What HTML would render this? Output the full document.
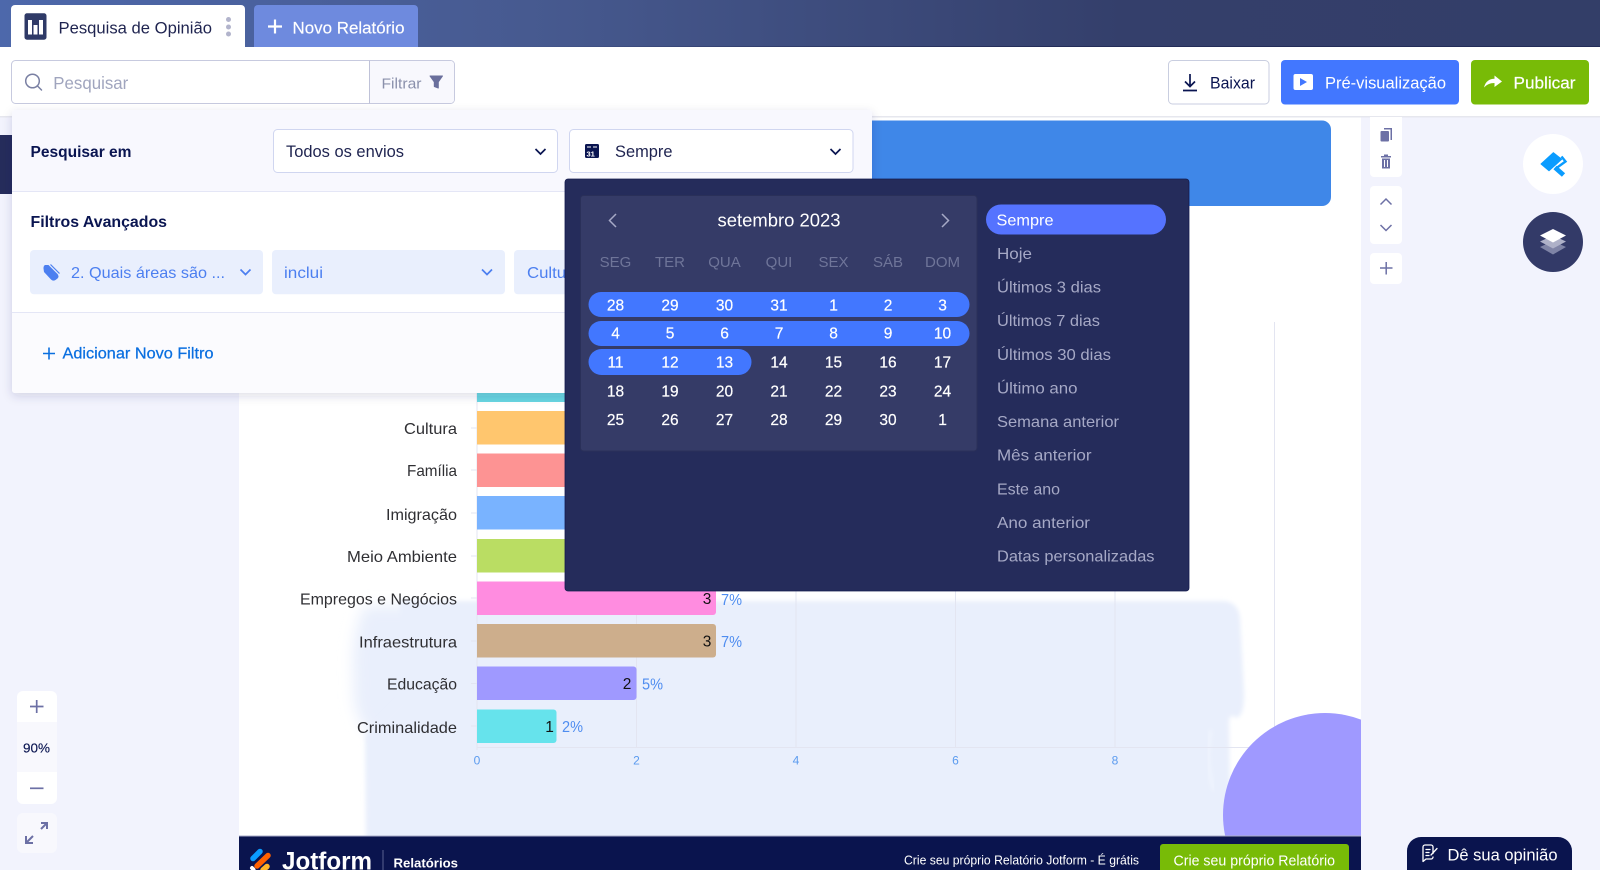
<!DOCTYPE html>
<html lang="pt">
<head>
<meta charset="utf-8">
<title>Pesquisa de Opinião</title>
<style>
html,body{margin:0;padding:0;width:1600px;height:870px;overflow:hidden;background:#f2f3fd}
svg{display:block;position:absolute;left:0;top:0;overflow:hidden}
text{font-family:"Liberation Sans",sans-serif;white-space:pre}
.d{fill:#1f2450;font-size:17px}
.n{fill:#0a1551;font-size:16px;font-weight:700}
.w{fill:#fff;font-size:17px;stroke:#fff;stroke-width:.15}
.c{fill:#4c7ff0;font-size:16px}
.l{fill:#2f2f33;font-size:16px}
.v{fill:#111;font-size:15.5px;text-anchor:middle}
.p{fill:#4f8df0;font-size:15.5px}
.t{fill:#5b9bef;font-size:12px;text-anchor:middle}
.h{fill:#6f7599;font-size:15px;text-anchor:middle}
.a{fill:#fff;font-size:15.5px;text-anchor:middle;stroke:#fff;stroke-width:.2}
.s{fill:#a6a9c6;font-size:16px}
</style>
</head>
<body>
<svg width="1600" height="870" viewBox="0 0 1600 870" xmlns="http://www.w3.org/2000/svg">
<defs>
<linearGradient id="top" x1="0" x2="1" y1="0" y2="0">
<stop offset="0" stop-color="#4d68ab"/><stop offset=".33" stop-color="#475a90"/><stop offset=".7" stop-color="#343f6b"/><stop offset="1" stop-color="#333e68"/>
</linearGradient>
<linearGradient id="ln" x1="0" x2="1" y1="0" y2="0">
<stop offset="0" stop-color="#232c58" stop-opacity="0"/><stop offset=".5" stop-color="#232c58"/><stop offset="1" stop-color="#232c58"/>
</linearGradient>
<filter id="sh" x="-5%" y="-5%" width="110%" height="115%"><feDropShadow dx="0" dy="3" stdDeviation="5" flood-color="#2a3060" flood-opacity=".16"/></filter>
<filter id="bl" x="-5%" y="-5%" width="110%" height="110%"><feGaussianBlur stdDeviation="2"/></filter>
<filter id="bl2" x="-50%" y="-20%" width="200%" height="140%"><feGaussianBlur stdDeviation="7"/></filter>
<clipPath id="pg"><rect x="239" y="117" width="1122" height="719"/></clipPath>
<clipPath id="fr"><rect x="0" y="0" width="1600" height="870"/></clipPath>
</defs>
<g clip-path="url(#fr)">

<!-- canvas -->
<rect width="1600" height="870" fill="#f2f3fd"/>
<rect x="0" y="135" width="14" height="59" fill="#252c5b"/>
<rect x="239" y="117" width="1122" height="753" fill="#fff"/>

<!-- decorative blob -->
<g clip-path="url(#pg)">
<path d="M365 606 H420 V735 H372 Q358 725 354 700 L353 655 Q356 620 365 606Z" fill="#e9effc" filter="url(#bl2)"/>
<path d="M400 601 H1222 Q1238 601 1240 618 L1244 690 Q1245 716 1236 718 Q1230 712 1229 722 L1231 845 H366 L365 735 L400 700Z" fill="#e9effc" filter="url(#bl)"/>
<path d="M1211 730 Q1204 760 1214 790" stroke="#f1f5fe" stroke-width="3" fill="none" filter="url(#bl)"/>
</g>

<!-- blue header banner -->
<rect x="600" y="120.500" width="731" height="85.500" rx="9" fill="#3f87e8"/>

<!-- chart grid -->
<g stroke="#e3e5f1" stroke-width="1" fill="none">
<path d="M477 322V750M636.500 322V747M796 322V747M955.500 322V747M1115 322V747M1274.500 322V747"/>
<path d="M477 747.500H1300"/>
<path d="M471 428H477M471 470H477M471 513H477M471 556H477M471 598H477M471 641H477M471 683.500H477M471 726H477"/>
</g>
<circle cx="1325" cy="815" r="102" fill="#9f99ff" clip-path="url(#pg)"/>

<!-- bars -->
<rect x="477" y="380" width="120" height="22" fill="#68d6e0"/>
<rect x="477" y="411" width="120" height="33.500" fill="#ffc66e"/>
<rect x="477" y="453.500" width="120" height="33.500" fill="#fd9393"/>
<rect x="477" y="496" width="120" height="33.500" fill="#79b3ff"/>
<rect x="477" y="539" width="120" height="33.500" fill="#badd63"/>
<path d="M477 581.500H713a3 3 0 0 1 3 3V612a3 3 0 0 1-3 3H477Z" fill="#ff8ce0"/>
<path d="M477 624H713a3 3 0 0 1 3 3V654.500a3 3 0 0 1-3 3H477Z" fill="#cdae8c"/>
<path d="M477 666.500H633.500a3 3 0 0 1 3 3V697a3 3 0 0 1-3 3H477Z" fill="#9f99ff"/>
<path d="M477 709.500H553.500a3 3 0 0 1 3 3V740a3 3 0 0 1-3 3H477Z" fill="#66e3ec"/>

<g>
<text class="l" x="404" y="434" textLength="53" lengthAdjust="spacingAndGlyphs">Cultura</text>
<text class="l" x="407" y="476" textLength="50" lengthAdjust="spacingAndGlyphs">Família</text>
<text class="l" x="386" y="520" textLength="71" lengthAdjust="spacingAndGlyphs">Imigração</text>
<text class="l" x="347" y="562" textLength="110" lengthAdjust="spacingAndGlyphs">Meio Ambiente</text>
<text class="l" x="300" y="604.500" textLength="157" lengthAdjust="spacingAndGlyphs">Empregos e Negócios</text>
<text class="l" x="359" y="647.500" textLength="98" lengthAdjust="spacingAndGlyphs">Infraestrutura</text>
<text class="l" x="387" y="689.500" textLength="70" lengthAdjust="spacingAndGlyphs">Educação</text>
<text class="l" x="357" y="733" textLength="100" lengthAdjust="spacingAndGlyphs">Criminalidade</text>
</g>
<text class="v" x="707" y="604">3</text><text class="p" x="721" y="605" textLength="21" lengthAdjust="spacingAndGlyphs">7%</text>
<text class="v" x="707" y="646.500">3</text><text class="p" x="721" y="647" textLength="21" lengthAdjust="spacingAndGlyphs">7%</text>
<text class="v" x="627" y="689">2</text><text class="p" x="642" y="689.500" textLength="21" lengthAdjust="spacingAndGlyphs">5%</text>
<text class="v" x="549.500" y="732">1</text><text class="p" x="562" y="732" textLength="21" lengthAdjust="spacingAndGlyphs">2%</text>
<text class="t" x="477" y="764.500">0</text><text class="t" x="636.500" y="764.500">2</text><text class="t" x="796" y="764.500">4</text><text class="t" x="955.500" y="764.500">6</text><text class="t" x="1115" y="764.500">8</text>

<!-- footer -->
<rect x="239" y="835.500" width="1122" height="1" fill="#a9adc9"/>
<rect x="239" y="836.500" width="1122" height="33.500" fill="#0a144e"/>
<g fill="none" stroke-linecap="round">
<path d="M253 858.500L260 851.500" stroke="#0a9cff" stroke-width="5.500"/>
<path d="M257 866L268 855.500" stroke="#ff6100" stroke-width="5.500"/>
<path d="M263 870L267 866.500" stroke="#ffb629" stroke-width="5.500"/>
<path d="M252 868L253.500 869.500" stroke="#fff" stroke-width="4"/>
</g>
<text x="282" y="869.500" fill="#fff" font-size="25" font-weight="700" textLength="90" lengthAdjust="spacingAndGlyphs">Jotform</text>
<rect x="382.500" y="850" width="1" height="20" fill="#5a6290"/>
<text x="393.500" y="867.500" fill="#fff" font-size="13" font-weight="700" textLength="64.500" lengthAdjust="spacingAndGlyphs">Relatórios</text>
<text x="904" y="864.500" fill="#fff" font-size="12.500" textLength="235" lengthAdjust="spacingAndGlyphs">Crie seu próprio Relatório Jotform - É grátis</text>
<path d="M1160 870V847a3 3 0 0 1 3-3H1346a3 3 0 0 1 3 3V870Z" fill="#78bb07"/>
<text x="1173.500" y="865.500" fill="#fff" font-size="14.500" textLength="161.500" lengthAdjust="spacingAndGlyphs">Crie seu próprio Relatório</text>

<!-- feedback -->
<path d="M1407 870V851a14 14 0 0 1 14-14H1558a14 14 0 0 1 14 14V870Z" fill="#0a144e"/>
<g fill="none" stroke="#fff" stroke-width="1.300" stroke-linecap="round" stroke-linejoin="round">
<path d="M1433 853.500V847a2 2 0 0 0-2-2H1425a2 2 0 0 0-2 2V861.500L1426 859H1431a2 2 0 0 0 2-2"/>
<path d="M1426 849.500H1430M1426 852.500H1429M1426 855.500H1429M1431 855L1437 848.500"/>
</g>
<text x="1447.500" y="860.500" fill="#fff" font-size="16.500" textLength="110" lengthAdjust="spacingAndGlyphs">Dê sua opinião</text>

<!-- top bar -->
<rect width="1600" height="47" fill="url(#top)"/>
<rect y="46" x="500" width="1100" height="1" fill="url(#ln)"/>
<rect y="47" width="1600" height="69" fill="#fff"/>
<rect y="116" width="1600" height="1.500" fill="#e6e7ee"/>

<path d="M11 47V9a4 4 0 0 1 4-4H241a4 4 0 0 1 4 4V47Z" fill="#fff"/>
<rect x="24.500" y="13.300" width="22" height="26.400" rx="2.500" fill="#2f3a67"/>
<g fill="#fff"><rect x="28" y="20" width="4" height="14.500"/><rect x="33.500" y="25" width="4" height="9.500"/><rect x="39" y="20" width="4" height="14.500"/></g>
<text class="d" x="58.500" y="33.300" textLength="153.500" lengthAdjust="spacingAndGlyphs">Pesquisa de Opinião</text>
<g fill="#b2b4cc"><circle cx="228.500" cy="19.500" r="2.500"/><circle cx="228.500" cy="27" r="2.500"/><circle cx="228.500" cy="34" r="2.500"/></g>

<path d="M254 47V9a4 4 0 0 1 4-4H414a4 4 0 0 1 4 4V47Z" fill="#6e8ade"/>
<path d="M268 26.500H282M275 19.500V33.500" stroke="#fff" stroke-width="2.200" fill="none"/>
<text class="w" x="292.500" y="33.300" textLength="112" lengthAdjust="spacingAndGlyphs">Novo Relatório</text>

<!-- search -->
<rect x="11.500" y="60.500" width="443" height="43" rx="4" fill="#fff" stroke="#c7cadf"/>
<path d="M369.500 61H450.500a3.500 3.500 0 0 1 3.500 3.500V99.500a3.500 3.500 0 0 1-3.500 3.500H369.500Z" fill="#f8f8fd"/>
<path d="M369.500 60.500V103.500" stroke="#bfc2d8" fill="none"/>
<circle cx="32.500" cy="81" r="6.800" fill="none" stroke="#7a80a3" stroke-width="1.500"/><path d="M37.500 86L41.500 90" stroke="#7a80a3" stroke-width="1.500" stroke-linecap="round"/>
<text x="53.300" y="89" fill="#a0a5be" font-size="17.500" textLength="75" lengthAdjust="spacingAndGlyphs">Pesquisar</text>
<text x="381.500" y="88.300" fill="#8a90ab" font-size="15" textLength="40" lengthAdjust="spacingAndGlyphs">Filtrar</text>
<path d="M430 76H442.500L438.300 82V88L434.300 86.500V82Z" fill="#6a6f9c" stroke="#6a6f9c" stroke-width="1" stroke-linejoin="round"/>

<!-- action buttons -->
<rect x="1168.500" y="60.500" width="100.500" height="43.500" rx="4" fill="#fff" stroke="#c9cee0"/>
<path d="M1190 74V86M1185 81.500L1190 86.500L1195 81.500M1183 90.500H1197" fill="none" stroke="#0a1551" stroke-width="1.700"/>
<text x="1210" y="88.500" fill="#0a1551" font-size="16.500" textLength="45" lengthAdjust="spacingAndGlyphs">Baixar</text>

<rect x="1281" y="60" width="178" height="44.500" rx="4" fill="#4277ff"/>
<rect x="1293.500" y="74" width="19.500" height="16" rx="2" fill="#fff"/><path d="M1300 78V86L1307 82Z" fill="#4277ff"/>
<text x="1325" y="88.500" fill="#fff" font-size="17" textLength="121" lengthAdjust="spacingAndGlyphs">Pré-visualização</text>

<rect x="1471" y="60" width="118" height="44.500" rx="4" fill="#78bb07"/>
<path d="M1484 87.500C1485.500 81.500 1489.500 78.800 1494.500 78.800V75.500L1502 81.500L1494.500 87V83C1490 83 1487 84.500 1484 87.500Z" fill="#fff"/>
<text x="1513.500" y="88.500" fill="#fff" font-size="17" stroke="#fff" stroke-width=".2" textLength="62" lengthAdjust="spacingAndGlyphs">Publicar</text>

<!-- right tools -->
<path d="M1370 117H1402V173a4 4 0 0 1-4 4H1374a4 4 0 0 1-4-4Z" fill="#fff"/>
<rect x="1370" y="186" width="32" height="58" rx="4" fill="#fff"/>
<rect x="1370" y="253" width="32" height="31" rx="4" fill="#fff"/>
<g fill="#6c70a5">
<path d="M1384 128H1392V140H1390.500V129.500H1384Z"/><rect x="1380.500" y="131" width="8.500" height="10.500" rx="1"/>
<path d="M1381 156H1391V157.500H1381ZM1384 154.500H1388V156H1384Z"/>
<path fill-rule="evenodd" d="M1382 158.500H1390V168.500H1382ZM1384 160V167H1385V160ZM1387 160V167H1388V160Z"/>
</g>
<g fill="none" stroke="#6c70a5" stroke-width="1.500">
<path d="M1380.500 204.500L1386 199L1391.500 204.500"/>
<path d="M1380.500 225L1386 230.500L1391.500 225"/>
<path d="M1380 268H1392.500M1386.200 262V274.500"/>
</g>
<circle cx="1553" cy="164" r="30" fill="#fff"/>
<path d="M1541 164L1553.300 152.700L1561.700 159.300L1549 170.700Z" fill="#0a9cff" stroke="#0a9cff" stroke-width="1" stroke-linejoin="round"/>
<path d="M1561.500 156.500L1565.500 161.500L1556.500 168" fill="none" stroke="#0a9cff" stroke-width="2.400"/>
<path d="M1555 167.500L1563.500 175" fill="none" stroke="#0a9cff" stroke-width="4.800"/>
<circle cx="1553" cy="242" r="30" fill="#333a68"/>
<path d="M1540 247L1553 241L1566 247L1553 254.500Z" fill="#7f84a6"/>
<path d="M1540 241.500L1553 235.500L1566 241.500L1553 248.500Z" fill="#aeb1c8"/>
<path d="M1540 235.500L1553 229L1566 235.500L1553 242.500Z" fill="#fff"/>

<!-- zoom -->
<path d="M17 722V697a6 6 0 0 1 6-6H51a6 6 0 0 1 6 6V722Z" fill="#fff"/>
<rect x="17" y="722" width="40" height="50" fill="#f8f8fd"/>
<path d="M17 772H57V798a6 6 0 0 1-6 6H23a6 6 0 0 1-6-6Z" fill="#fff"/>
<path d="M30 706.500H43.500M36.700 700V713" stroke="#6c70a5" stroke-width="1.700" fill="none"/>
<path d="M30 788.300H43.500" stroke="#6c70a5" stroke-width="1.700" fill="none"/>
<text x="23" y="752.500" fill="#0a1551" font-size="13" textLength="27" lengthAdjust="spacingAndGlyphs" stroke="#0a1551" stroke-width=".15">90%</text>
<rect x="17" y="813" width="40" height="40" rx="6" fill="#f8f8fd"/>
<g fill="none" stroke="#6c70a5" stroke-width="2">
<path d="M41 823H47V829M47 823L41 829"/><path d="M26 836V843H33M26 843L33 836"/>
</g>

<!-- filter panel -->
<g filter="url(#sh)"><rect x="12" y="110" width="860" height="283" rx="3" fill="#fff"/></g>
<path d="M12 113a3 3 0 0 1 3-3H869a3 3 0 0 1 3 3V191H12Z" fill="#f8f8fe"/>
<path d="M12 191.500H872" stroke="#e4e6f6" fill="none"/>
<path d="M12 312.500H872V390a3 3 0 0 1-3 3H15a3 3 0 0 1-3-3Z" fill="#fbfbfe"/>
<path d="M12 312.500H872" stroke="#e4e6f6" fill="none"/>

<text class="n" x="30.500" y="157" textLength="101" lengthAdjust="spacingAndGlyphs">Pesquisar em</text>
<rect x="273.500" y="129.500" width="284" height="43" rx="4" fill="#fff" stroke="#d0d6f0"/>
<text x="286" y="157" fill="#1f2450" font-size="16.500" textLength="118" lengthAdjust="spacingAndGlyphs">Todos os envios</text>
<path d="M535.500 149L540.500 154L545.500 149" fill="none" stroke="#0a1551" stroke-width="1.700"/>

<rect x="569.500" y="129.500" width="283.500" height="43" rx="4" fill="#fff" stroke="#d0d6f0"/>
<rect x="585" y="144" width="14" height="14" rx="1.500" fill="#0a1551"/>
<path d="M587 147H591M593 147H597" stroke="#fff" stroke-width="1" fill="none"/>
<text x="586.500" y="156.500" fill="#fff" font-size="7.500" font-weight="700">31</text>
<text x="615" y="157" fill="#1f2450" font-size="16.500" textLength="57.500" lengthAdjust="spacingAndGlyphs">Sempre</text>
<path d="M830.500 149L835.500 154L840.500 149" fill="none" stroke="#0a1551" stroke-width="1.700"/>

<text class="n" x="30.500" y="227" textLength="136.500" lengthAdjust="spacingAndGlyphs">Filtros Avançados</text>
<rect x="30" y="250" width="233" height="44.300" rx="4" fill="#e9effd"/>
<rect x="272" y="250" width="233" height="44.300" rx="4" fill="#e9effd"/>
<path d="M514 254a4 4 0 0 1 4-4H580V294.300H518a4 4 0 0 1-4-4Z" fill="#e9effd"/>
<path d="M43.500 268.500Q43.300 266 45 265H48.500L57.500 274Q59.500 276.500 57.500 278.500L55.500 280Q53 281.500 51 279.500L44 272Z" fill="#4c7ff0"/>
<path d="M50.500 264.500L59.500 273.500" stroke="#4c7ff0" stroke-width="1.200" fill="none"/>
<text class="c" x="71" y="278" textLength="154" lengthAdjust="spacingAndGlyphs">2. Quais áreas são ...</text>
<path d="M240.500 269.500L245.500 274.500L250.500 269.500" fill="none" stroke="#4c7ff0" stroke-width="1.700"/>
<text class="c" x="284" y="278" textLength="39" lengthAdjust="spacingAndGlyphs">inclui</text>
<path d="M482 269.500L487 274.500L492 269.500" fill="none" stroke="#4c7ff0" stroke-width="1.700"/>
<text class="c" x="527" y="278" textLength="54" lengthAdjust="spacingAndGlyphs">Cultura</text>

<path d="M43 353.500H55M49 347.500V359.500" stroke="#0a6fe0" stroke-width="1.600" fill="none"/>
<text x="62.500" y="358.500" fill="#0a6fe0" font-size="15.500" stroke="#0a6fe0" stroke-width=".25" textLength="151" lengthAdjust="spacingAndGlyphs">Adicionar Novo Filtro</text>

<!-- calendar popup -->
<rect x="565" y="179" width="624" height="412" rx="3" fill="#252c5b" stroke="#141b4e" stroke-width=".8"/>
<rect x="580.500" y="195.500" width="396.500" height="255.500" rx="3" fill="#353b67" stroke="#2a3059"/>
<path d="M616 214L609.500 220.500L616 227" fill="none" stroke="#a6a9c6" stroke-width="1.500"/>
<path d="M942 214L948.500 220.500L942 227" fill="none" stroke="#a6a9c6" stroke-width="1.500"/>
<text x="717.500" y="226.500" fill="#fff" font-size="18" textLength="123" lengthAdjust="spacingAndGlyphs">setembro 2023</text>

<g>
<text class="h" x="615.500" y="267">SEG</text><text class="h" x="670" y="267">TER</text><text class="h" x="724.500" y="267">QUA</text><text class="h" x="779" y="267">QUI</text><text class="h" x="833.500" y="267">SEX</text><text class="h" x="888" y="267">SÁB</text><text class="h" x="942.500" y="267">DOM</text>
</g>
<rect x="588.500" y="292" width="381" height="25" rx="12.500" fill="#4277ff"/>
<rect x="588.500" y="321" width="381" height="25" rx="12.500" fill="#4277ff"/>
<rect x="588.500" y="349" width="163" height="26" rx="13" fill="#4277ff"/>
<g>
<text class="a" x="615.500" y="310.300">28</text><text class="a" x="670" y="310.300">29</text><text class="a" x="724.500" y="310.300">30</text><text class="a" x="779" y="310.300">31</text><text class="a" x="833.500" y="310.300">1</text><text class="a" x="888" y="310.300">2</text><text class="a" x="942.500" y="310.300">3</text>
<text class="a" x="615.500" y="338.700">4</text><text class="a" x="670" y="338.700">5</text><text class="a" x="724.500" y="338.700">6</text><text class="a" x="779" y="338.700">7</text><text class="a" x="833.500" y="338.700">8</text><text class="a" x="888" y="338.700">9</text><text class="a" x="942.500" y="338.700">10</text>
<text class="a" x="615.500" y="367.300">11</text><text class="a" x="670" y="367.300">12</text><text class="a" x="724.500" y="367.300">13</text><text class="a" x="779" y="367.300">14</text><text class="a" x="833.500" y="367.300">15</text><text class="a" x="888" y="367.300">16</text><text class="a" x="942.500" y="367.300">17</text>
<text class="a" x="615.500" y="396.300">18</text><text class="a" x="670" y="396.300">19</text><text class="a" x="724.500" y="396.300">20</text><text class="a" x="779" y="396.300">21</text><text class="a" x="833.500" y="396.300">22</text><text class="a" x="888" y="396.300">23</text><text class="a" x="942.500" y="396.300">24</text>
<text class="a" x="615.500" y="425">25</text><text class="a" x="670" y="425">26</text><text class="a" x="724.500" y="425">27</text><text class="a" x="779" y="425">28</text><text class="a" x="833.500" y="425">29</text><text class="a" x="888" y="425">30</text><text class="a" x="942.500" y="425">1</text>
</g>

<rect x="986" y="204.500" width="180" height="30" rx="15" fill="#5573ff"/>
<text x="996.500" y="225.500" fill="#fff" font-size="16" textLength="57" lengthAdjust="spacingAndGlyphs">Sempre</text>
<text class="s" x="997" y="259" textLength="35" lengthAdjust="spacingAndGlyphs">Hoje</text>
<text class="s" x="997" y="292.500" textLength="104" lengthAdjust="spacingAndGlyphs">Últimos 3 dias</text>
<text class="s" x="997" y="326" textLength="103" lengthAdjust="spacingAndGlyphs">Últimos 7 dias</text>
<text class="s" x="997" y="360" textLength="114" lengthAdjust="spacingAndGlyphs">Últimos 30 dias</text>
<text class="s" x="997" y="393.500" textLength="80.500" lengthAdjust="spacingAndGlyphs">Último ano</text>
<text class="s" x="997" y="427" textLength="122" lengthAdjust="spacingAndGlyphs">Semana anterior</text>
<text class="s" x="997" y="460.700" textLength="94.500" lengthAdjust="spacingAndGlyphs">Mês anterior</text>
<text class="s" x="997" y="494.500" textLength="63" lengthAdjust="spacingAndGlyphs">Este ano</text>
<text class="s" x="997" y="528" textLength="93" lengthAdjust="spacingAndGlyphs">Ano anterior</text>
<text class="s" x="997" y="561.500" textLength="157.500" lengthAdjust="spacingAndGlyphs">Datas personalizadas</text>
</g>
</svg>
</body>
</html>
